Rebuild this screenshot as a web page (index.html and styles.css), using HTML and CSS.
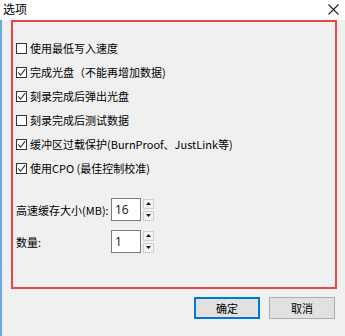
FILE: index.html
```html
<!DOCTYPE html>
<html>
<head>
<meta charset="utf-8">
<link rel="stylesheet" href="styles.css">
</head>
<body>
<div class="window">
  <div class="titlebar">
    <span class="title">选项</span>
    <svg class="close" width="11" height="11" viewBox="0 0 11 11"><path d="M0.5 0.5 L10.5 10.5 M10.5 0.5 L0.5 10.5" stroke="#222" stroke-width="1.1" fill="none"/></svg>
  </div>
  <div class="body">
    <div class="panel">
      <div class="checks">
        <label class="row"><span class="box"></span><span>使用最低写入速度</span></label>
        <label class="row"><span class="box checked"><svg width="9" height="9" viewBox="0 0 9 9"><path d="M1 4.5 L3.5 7.2 L8.2 1.2" stroke="#333" stroke-width="1.1" fill="none"/></svg></span><span>完成光盘（不能再增加数据)</span></label>
        <label class="row"><span class="box checked"><svg width="9" height="9" viewBox="0 0 9 9"><path d="M1 4.5 L3.5 7.2 L8.2 1.2" stroke="#333" stroke-width="1.1" fill="none"/></svg></span><span>刻录完成后弹出光盘</span></label>
        <label class="row"><span class="box"></span><span>刻录完成后测试数据</span></label>
        <label class="row"><span class="box checked"><svg width="9" height="9" viewBox="0 0 9 9"><path d="M1 4.5 L3.5 7.2 L8.2 1.2" stroke="#333" stroke-width="1.1" fill="none"/></svg></span><span>缓冲区过载保护(BurnProof、JustLink等)</span></label>
        <label class="row"><span class="box checked"><svg width="9" height="9" viewBox="0 0 9 9"><path d="M1 4.5 L3.5 7.2 L8.2 1.2" stroke="#333" stroke-width="1.1" fill="none"/></svg></span><span>使用CPO (最佳控制校准)</span></label>
      </div>
      <div class="spins">
        <div class="spinrow">
          <span class="lbl">高速缓存大小(MB):</span>
          <span class="input">16</span>
          <span class="spinner">
            <span class="sbtn"><svg width="5" height="3" viewBox="0 0 5 3"><path d="M0 3 L2.5 0 L5 3 Z" fill="#111"/></svg></span>
            <span class="sbtn"><svg width="5" height="3" viewBox="0 0 5 3"><path d="M0 0 L5 0 L2.5 3 Z" fill="#111"/></svg></span>
          </span>
        </div>
        <div class="spinrow">
          <span class="lbl">数量:</span>
          <span class="input">1</span>
          <span class="spinner">
            <span class="sbtn"><svg width="5" height="3" viewBox="0 0 5 3"><path d="M0 3 L2.5 0 L5 3 Z" fill="#111"/></svg></span>
            <span class="sbtn"><svg width="5" height="3" viewBox="0 0 5 3"><path d="M0 0 L5 0 L2.5 3 Z" fill="#111"/></svg></span>
          </span>
        </div>
      </div>
    </div>
    <div class="buttons">
      <button class="btn primary">确定</button>
      <button class="btn">取消</button>
    </div>
  </div>
</div>
</body>
</html>
```
FILE: styles.css
```css
html, body {
  margin: 0;
  padding: 0;
}
body {
  width: 345px;
  height: 336px;
  overflow: hidden;
  background: #f0f0f0;
  font-family: "Noto Sans CJK SC", "Microsoft YaHei", sans-serif;
  font-size: 11px;
  color: #000;
}
.window {
  display: flex;
  flex-direction: column;
  height: 336px;
}
.titlebar {
  height: 20px;
  background: #fff;
  display: flex;
  align-items: center;
  justify-content: space-between;
  padding: 0 6px 0 3px;
}
.title {
  font-size: 12px;
  line-height: 20px;
  margin-top: -2px;
}
.close {
  margin-top: -1px;
}
.body {
  flex: 1;
  border-left: 2px solid #6fa8dc;
  display: flex;
  flex-direction: column;
}
.panel {
  margin-left: 9px;
  width: 319px;
  height: 251px;
  border: 2px solid #e9434c;
  padding: 14px 0 0 3px;
  box-sizing: content-box;
}
.checks {
  display: flex;
  flex-direction: column;
}
.row {
  height: 24px;
  display: flex;
  align-items: center;
  gap: 3px;
  white-space: nowrap;
}
.box {
  width: 11px;
  height: 11px;
  border: 1px solid #333;
  background: #fff;
  display: flex;
  align-items: center;
  justify-content: center;
  box-sizing: border-box;
  margin-top: 1px;
}
.spins {
  margin-top: 18px;
  display: flex;
  flex-direction: column;
  gap: 9px;
}
.spinrow {
  display: flex;
  align-items: center;
  height: 23px;
}
.lbl {
  width: 95px;
  white-space: nowrap;
}
.input {
  width: 30px;
  height: 23px;
  box-sizing: border-box;
  background: #fff;
  border: 1px solid #7a7a7a;
  font-size: 12px;
  line-height: 21px;
  padding-left: 3px;
  font-family: "Open Sans", "Segoe UI", sans-serif;
  color: #111;
}
.spinner {
  margin-left: 2px;
  display: flex;
  flex-direction: column;
  gap: 2px;
}
.sbtn {
  width: 11px;
  height: 10px;
  box-sizing: border-box;
  border: 1px solid #d0d0d0;
  background: #f4f4f4;
  display: flex;
  align-items: center;
  justify-content: center;
}
.buttons {
  display: flex;
  justify-content: flex-end;
  gap: 9px;
  padding: 8px 10px 0 0;
}
.btn {
  width: 66px;
  height: 22px;
  box-sizing: border-box;
  background: #e1e1e1;
  border: 1px solid #adadad;
  font-family: "Noto Sans CJK SC", "Microsoft YaHei", sans-serif;
  font-size: 11px;
  color: #000;
  padding: 0;
  margin: 0;
}
.btn.primary {
  border: 2px solid #0078d7;
}
```
